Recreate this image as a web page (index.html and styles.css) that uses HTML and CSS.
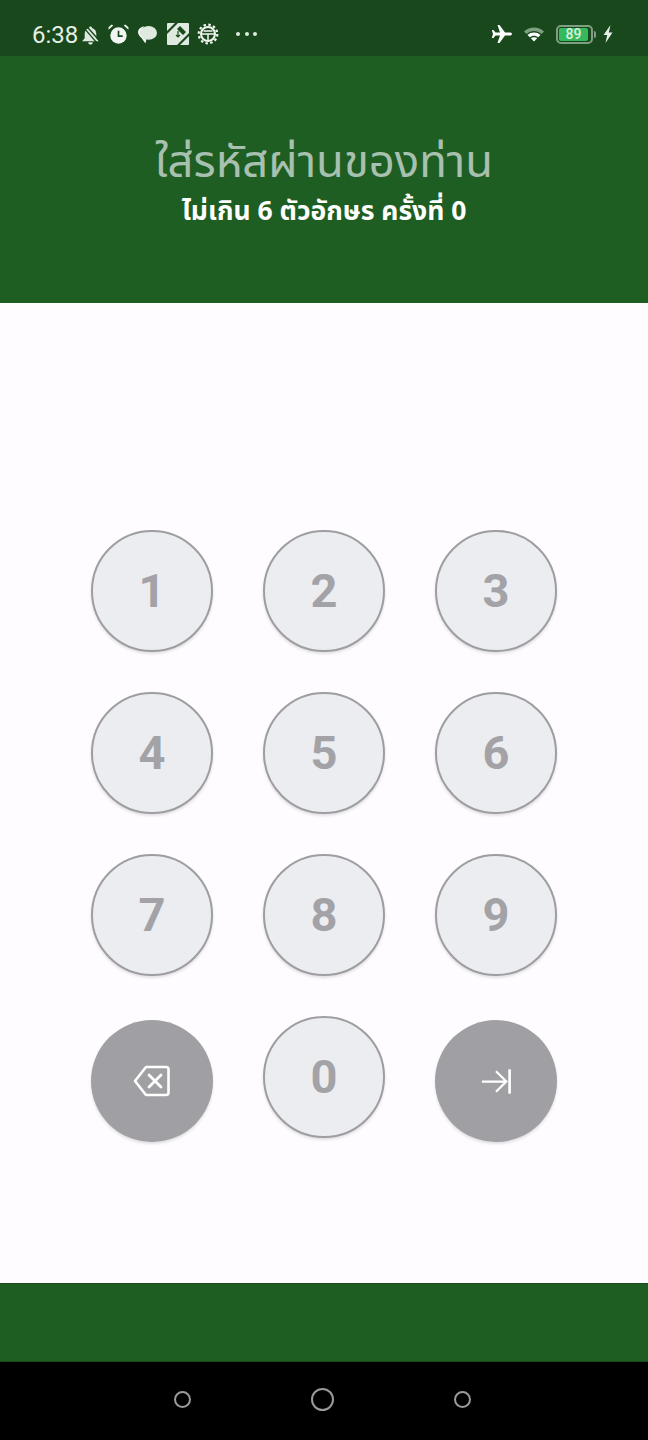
FILE: index.html
```html
<!DOCTYPE html>
<html lang="th">
<head>
<meta charset="utf-8">
<title>PIN</title>
<link rel="stylesheet" href="styles.css">
</head>
<body>
<div class="screen">
  <div class="status">
    <div class="status-left">
      <span class="time">6:38</span>
      <svg class="ic bell" viewBox="1 1 18 18"><path d="M10 1.500c-.8 0-1.400.6-1.500 1.400C5.800 3.700 4.500 6 4.500 8.500v4L2 15.500h16l-2.500-3v-4C15.500 6 14.200 3.700 11.500 2.900 11.400 2.100 10.800 1.500 10 1.500zM7.800 16.500h4.400a2.200 2.200 0 0 1-4.400 0z" fill="#dfe9df"/><path d="M3.500 2.500l13 15M6.500 1.500l12 13.500" stroke="#18481b" stroke-width="1.300"/></svg>
      <svg class="ic alarm" viewBox="0 0 20 20"><circle cx="10" cy="11" r="7.800" fill="#f2f6f2"/><path d="M10 6.500V11.500H14" fill="none" stroke="#18481b" stroke-width="1.600"/><path d="M.5 5.500 5 1.500 3.500.5.500 3zM19.500 5.500 15 1.500 16.500.5 19.500 3z" fill="#f2f6f2"/></svg>
      <svg class="ic chat" viewBox="1 2 18 17"><ellipse cx="11" cy="8.500" rx="8" ry="6.500" fill="#dfe9df"/><path d="M1 8C1 5 4 2.500 7 2.500 4.500 4.500 3 7 3.500 9.500 4.500 12.500 7 14 9 14.500L8 18.500 4.500 13.500C2.500 12 1 10 1 8z" fill="#f2f6f2"/></svg>
      <svg class="ic app" viewBox="0 0 22 22"><rect width="22" height="22" rx="1" fill="#dfe9df"/><path d="M0 8 8 0h3L0 11zM22 10 10 22h3l9-9zM13 3l6 6-3 3-6-6z" fill="#18481b"/><path d="M11 8v6M9 12l2 2 2-2" stroke="#18481b" stroke-width="1.200" fill="none"/></svg>
      <svg class="ic gear" viewBox="0 0 22 22"><circle cx="11" cy="11" r="7" fill="none" stroke="#f2f6f2" stroke-width="2"/><path d="M4 11h14M11 11v6M6.500 8h9" stroke="#f2f6f2" stroke-width="1.500"/><circle cx="11" cy="11" r="9.300" fill="none" stroke="#f2f6f2" stroke-width="2.200" stroke-dasharray="2.500 2.370"/></svg>
      <span class="dots"><i></i><i></i><i></i></span>
    </div>
    <div class="status-right">
      <svg class="ic plane" viewBox="0 0 22 20"><path d="M21 10c0-.9-1-1.500-2-1.500h-5L8.500 1H6.500l2.500 7.500H4.500L2.500 6H.8l1.200 4-1.200 4h1.700l2-2.500H9L6.500 19h2L14 11.500h5c1 0 2-.6 2-1.500z" fill="#fff"/></svg>
      <svg class="ic wifi" viewBox="0 0 22 18"><path d="M1 6.500C6.500 1 15.500 1 21 6.500l-2.500 2.500C14 5 8 5 3.500 9z" fill="#7f9f83"/><path d="M4.500 10C8 6.700 14 6.700 17.500 10l-2.300 2.300C12.800 10.200 9.200 10.200 6.800 12.300z" fill="#fff"/><path d="M7.800 13.300c1.800-1.500 4.600-1.500 6.400 0L11 16.500z" fill="#fff"/></svg>
      <span class="battery"><span class="level">89</span></span><span class="nub"></span>
      <svg class="ic bolt" viewBox="0 0 12 18"><path d="M8.500 0 1.500 10h3.700L3.500 18l7-10.500H6.800z" fill="#e8efe8"/></svg>
    </div>
  </div>

  <header class="head">
    <h1 class="title">ใส่รหัสผ่านของท่าน</h1>
    <p class="sub">ไม่เกิน 6 ตัวอักษร ครั้งที่ 0</p>
  </header>

  <main class="pad">
    <div class="keys">
      <button class="key">1</button>
      <button class="key">2</button>
      <button class="key">3</button>
      <button class="key">4</button>
      <button class="key">5</button>
      <button class="key">6</button>
      <button class="key">7</button>
      <button class="key">8</button>
      <button class="key">9</button>
      <button class="key action" aria-label="ลบ">
        <svg class="act-ic back" viewBox="0 0 38 32"><path d="M13 2H33a2.500 2.500 0 0 1 2.500 2.500v23A2.500 2.500 0 0 1 33 30H13L2 16z" fill="none" stroke="#fff" stroke-width="2.600" stroke-linejoin="round"/><path d="M16 10l12 12M28 10 16 22" stroke="#fff" stroke-width="2.800" stroke-linecap="round"/></svg>
      </button>
      <button class="key">0</button>
      <button class="key action" aria-label="ถัดไป">
        <svg class="act-ic next" viewBox="0 0 32 28"><path d="M1 14H27M16 3 27 14 16 25" fill="none" stroke="#fff" stroke-width="2.400"/><path d="M30.500 1V27" stroke="#fff" stroke-width="2.800"/></svg>
      </button>
    </div>
  </main>

  <div class="foot"></div>

  <nav class="nav">
    <span class="nav-dot"></span>
    <span class="nav-dot big"></span>
    <span class="nav-dot"></span>
  </nav>
</div>
</body>
</html>
```

FILE: styles.css
```css
* { box-sizing: border-box; }
html, body { margin: 0; padding: 0; }
body { width: 648px; height: 1440px; overflow: hidden; font-family: Roboto, "Noto Sans", sans-serif; }
.screen { display: flex; flex-direction: column; width: 648px; height: 1440px; background: #fefcff; }

.status { height: 56px; flex: none; background: #18481b; display: flex; justify-content: space-between; align-items: flex-start; padding: 23px 34px 0 32px; color: #eef4ee; }
.status-left, .status-right { display: flex; align-items: center; height: 24px; }
.time { width: 45px; font-size: 24px; font-weight: 400; line-height: 24px; color: #e6efe6; }
.ic { display: block; flex: none; }
.bell { width: 19px; height: 19px; margin-left: 4px; }
.alarm { width: 21px; height: 21px; margin-left: 8px; margin-top: -2px; }
.chat { width: 19px; height: 18px; margin-left: 9px; }
.app { width: 22px; height: 22px; margin-left: 10px; margin-top: -2px; }
.gear { width: 22px; height: 22px; margin-left: 8px; margin-top: -2px; }
.dots { display: flex; gap: 4.500px; margin-left: 17px; margin-top: -2px; }
.dots i { width: 4px; height: 4px; border-radius: 50%; background: #dfe9df; }
.plane { width: 22px; height: 20px; margin-top: -2px; }
.wifi { width: 22px; height: 18px; margin-left: 10px; margin-top: -2px; }
.battery { width: 37px; height: 19px; margin-left: 11px; margin-top: -2px; border: 2px solid #7f9f83; border-radius: 5px; padding: 1px; display: flex; }
.level { width: 29px; height: 13px; background: #36b85e; border-radius: 2px; color: #d8f0dc; font-size: 14px; font-weight: 500; line-height: 13px; text-align: center; }
.nub { width: 2px; height: 7px; background: #7f9f83; margin-left: 1px; margin-top: -2px; border-radius: 0 2px 2px 0; }
.bolt { width: 12px; height: 18px; margin-left: 6px; margin-top: -2px; }

.head { height: 247px; flex: none; background: #1e5e22; text-align: center; padding-top: 78px; }
.title { margin: 0; font-family: "Noto Sans Thai", "Noto Sans", sans-serif; font-weight: 400; font-size: 45.400px; line-height: 58px; color: #a8c0b0; }
.sub { margin: 2px 0 0; font-family: "Noto Sans Thai", "Noto Sans", sans-serif; font-weight: 700; font-size: 26.500px; line-height: 36px; color: #fff; }

.pad { flex: 1; padding: 227px 91px 0; }
.keys { display: grid; grid-template-columns: repeat(3, 122px); grid-auto-rows: 122px; column-gap: 50px; row-gap: 40px; }
.key { width: 122px; height: 122px; padding: 0 0 2px; border-radius: 50%; border: 2px solid #9e9ea2; background: #ecedf1; color: #a3a3a7; font-family: Roboto, sans-serif; font-weight: 700; font-size: 47px; box-shadow: 0 2px 3px rgba(0,0,0,.12); display: flex; align-items: center; justify-content: center; }
.action { margin-top: 4px; padding: 0; border: none; background: #a09fa4; }
.act-ic { display: block; }
.back { width: 38px; height: 32px; }
.next { width: 30px; height: 27px; }

.foot { height: 79px; flex: none; background: #1e5e22; border-top: 1px solid #17491b; border-bottom: 1px solid #17491b; }

.nav { height: 78px; flex: none; background: #000; display: grid; grid-template-columns: repeat(3, 140px); justify-content: center; justify-items: center; align-items: center; padding: 0 4px 3px 0; }
.nav-dot { width: 17px; height: 17px; border: 2px solid #9a9a9a; border-radius: 50%; }
.nav-dot.big { width: 23px; height: 23px; }
```
